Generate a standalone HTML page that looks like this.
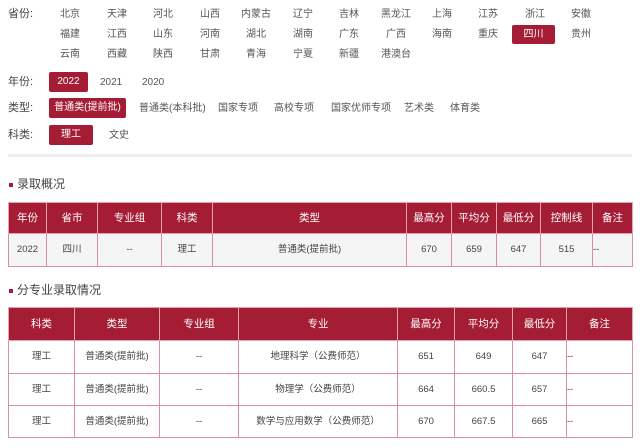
<!DOCTYPE html><html><head><meta charset="utf-8"><style>
*{margin:0;padding:0;box-sizing:border-box}
body{width:640px;height:448px;background:#fff;font-family:"Liberation Sans","Noto Sans CJK SC",sans-serif;color:#444;position:relative;overflow:hidden;font-size:10px;line-height:1.2}
.a{position:absolute;white-space:nowrap}
.lab{font-size:11px;color:#444}
.o{position:absolute;font-size:10px;color:#555;text-align:center;width:44px;margin-left:-22px}
.sel{position:absolute;background:#a51d35;color:#fff;border-radius:2px;font-size:10px;display:flex;align-items:center;justify-content:center}
table{position:absolute;left:8px;width:624px;border-collapse:collapse;table-layout:fixed}
th{background:#a51d35;color:#fff;font-weight:normal;font-size:10.5px;border:1px solid #e8a0ad;text-align:center;vertical-align:middle}
td{border:1px solid #d9909e;text-align:center;font-size:9.5px;color:#444;vertical-align:middle}
.h{position:absolute;left:9px;font-size:12px;color:#444}
.h:before{content:"";display:inline-block;width:4px;height:4px;background:#a51d35;margin-right:4px;vertical-align:middle}
</style></head><body>
<div class="a lab" style="left:8px;top:8px">省份:</div>
<div class="o" style="left:70px;top:9px">北京</div><div class="o" style="left:117px;top:9px">天津</div><div class="o" style="left:163px;top:9px">河北</div><div class="o" style="left:210px;top:9px">山西</div><div class="o" style="left:256px;top:9px">内蒙古</div><div class="o" style="left:303px;top:9px">辽宁</div><div class="o" style="left:349px;top:9px">吉林</div><div class="o" style="left:396px;top:9px">黑龙江</div><div class="o" style="left:442px;top:9px">上海</div><div class="o" style="left:488px;top:9px">江苏</div><div class="o" style="left:535px;top:9px">浙江</div><div class="o" style="left:581px;top:9px">安徽</div>
<div class="o" style="left:70px;top:29px">福建</div><div class="o" style="left:117px;top:29px">江西</div><div class="o" style="left:163px;top:29px">山东</div><div class="o" style="left:210px;top:29px">河南</div><div class="o" style="left:256px;top:29px">湖北</div><div class="o" style="left:303px;top:29px">湖南</div><div class="o" style="left:349px;top:29px">广东</div><div class="o" style="left:396px;top:29px">广西</div><div class="o" style="left:442px;top:29px">海南</div><div class="o" style="left:488px;top:29px">重庆</div>
<div class="sel" style="left:512px;top:25px;width:43px;height:19px">四川</div>
<div class="o" style="left:581px;top:29px">贵州</div>
<div class="o" style="left:70px;top:49px">云南</div><div class="o" style="left:117px;top:49px">西藏</div><div class="o" style="left:163px;top:49px">陕西</div><div class="o" style="left:210px;top:49px">甘肃</div><div class="o" style="left:256px;top:49px">青海</div><div class="o" style="left:303px;top:49px">宁夏</div><div class="o" style="left:349px;top:49px">新疆</div><div class="o" style="left:396px;top:49px">港澳台</div>
<div class="a lab" style="left:8px;top:76px">年份:</div>
<div class="sel" style="left:49px;top:72px;width:39px;height:20px">2022</div>
<div class="a" style="left:100px;top:77px;color:#555">2021</div><div class="a" style="left:142px;top:77px;color:#555">2020</div>
<div class="a lab" style="left:8px;top:102px">类型:</div>
<div class="sel" style="left:49px;top:98px;width:77px;height:20px">普通类(提前批)</div>
<div class="a" style="left:139px;top:103px;color:#555">普通类(本科批)</div><div class="a" style="left:218px;top:103px;color:#555">国家专项</div><div class="a" style="left:274px;top:103px;color:#555">高校专项</div><div class="a" style="left:331px;top:103px;color:#555">国家优师专项</div><div class="a" style="left:404px;top:103px;color:#555">艺术类</div><div class="a" style="left:450px;top:103px;color:#555">体育类</div>
<div class="a lab" style="left:8px;top:129px">科类:</div>
<div class="sel" style="left:49px;top:125px;width:44px;height:20px">理工</div>
<div class="a" style="left:109px;top:130px;color:#555">文史</div>
<div class="a" style="left:8px;top:154px;width:624px;height:3px;background:#eee"></div>
<div class="h" style="top:177px">录取概况</div>
<table style="top:202px"><colgroup><col style="width:38px"><col style="width:51px"><col style="width:64px"><col style="width:51px"><col style="width:194px"><col style="width:45px"><col style="width:45px"><col style="width:44px"><col style="width:52px"><col style="width:40px"></colgroup>
<tr style="height:31px"><th>年份</th><th>省市</th><th>专业组</th><th>科类</th><th>类型</th><th>最高分</th><th>平均分</th><th>最低分</th><th>控制线</th><th>备注</th></tr>
<tr style="height:33px;background:#f5f5f5"><td>2022</td><td>四川</td><td>--</td><td>理工</td><td>普通类(提前批)</td><td>670</td><td>659</td><td>647</td><td>515</td><td style="text-align:left">--</td></tr></table>
<div class="h" style="top:283px">分专业录取情况</div>
<table style="top:307px"><colgroup><col style="width:66px"><col style="width:85px"><col style="width:79px"><col style="width:159px"><col style="width:57px"><col style="width:58px"><col style="width:54px"><col style="width:66px"></colgroup>
<tr style="height:33px"><th>科类</th><th>类型</th><th>专业组</th><th>专业</th><th>最高分</th><th>平均分</th><th>最低分</th><th>备注</th></tr>
<tr style="height:33px"><td>理工</td><td>普通类(提前批)</td><td>--</td><td>地理科学（公费师范）</td><td>651</td><td>649</td><td>647</td><td style="text-align:left">--</td></tr>
<tr style="height:32px"><td>理工</td><td>普通类(提前批)</td><td>--</td><td>物理学（公费师范）</td><td>664</td><td>660.5</td><td>657</td><td style="text-align:left">--</td></tr>
<tr style="height:32px"><td>理工</td><td>普通类(提前批)</td><td>--</td><td>数学与应用数学（公费师范）</td><td>670</td><td>667.5</td><td>665</td><td style="text-align:left">--</td></tr></table>
</body></html>
